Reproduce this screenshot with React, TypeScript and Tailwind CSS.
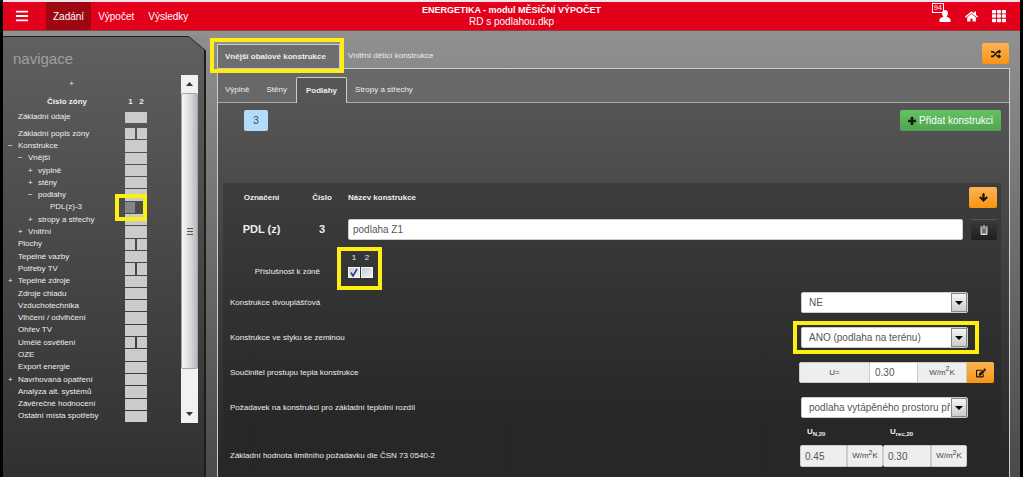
import { ReactNode } from "react";
import {
  FaArrowDown,
  FaBars,
  FaEdit,
  FaHome,
  FaRandom,
  FaTh,
} from "react-icons/fa";

type NavItem = {
  name: string;
  level?: number;
  sign?: string;
  split?: boolean;
  current?: boolean;
};

const navItems: NavItem[] = [
  { name: "Základní popis zóny", split: true },
  { name: "Konstrukce", sign: "−" },
  { name: "Vnější", sign: "−", level: 1 },
  { name: "výplně", sign: "+", level: 2 },
  { name: "stěny", sign: "+", level: 2 },
  { name: "podlahy", sign: "−", level: 2 },
  { name: "PDL(z)-3", level: 3, current: true },
  { name: "stropy a střechy", sign: "+", level: 2 },
  { name: "Vnitřní", sign: "+", level: 1 },
  { name: "Plochy", split: true },
  { name: "Tepelné vazby" },
  { name: "Potřeby TV", split: true },
  { name: "Tepelné zdroje", sign: "+" },
  { name: "Zdroje chladu" },
  { name: "Vzduchotechnika" },
  { name: "Vlhčení / odvlhčení" },
  { name: "Ohřev TV" },
  { name: "Umělé osvětlení", split: true },
  { name: "OZE" },
  { name: "Export energie" },
  { name: "Navrhovaná opatření", sign: "+" },
  { name: "Analýza alt. systémů" },
  { name: "Závěrečné hodnocení" },
  { name: "Ostatní místa spotřeby" },
];

const indents = ["pl-0", "pl-[10px]", "pl-[20px]", "pl-[32px]"];

const orangeButton =
  "flex items-center justify-center bg-linear-to-b from-[#fbb450] to-[#f89406] text-[#1c1408]";

// Yellow frame drawn over the part of the form being pointed at
const Highlight = ({ className }: { className: string }) => (
  <span
    className={`pointer-events-none absolute z-10 border-4 border-[#fdf010] ${className}`}
  />
);

const Header = () => (
  <header className="grid grid-cols-[1fr_auto_1fr] h-[31px] border-t-2 border-t-[#f3e3ec] border-b border-b-[#8b4046] bg-[#e2001a] text-white">
    <nav className="flex items-stretch text-[10px]">
      <button aria-label="Menu" className="w-[43px] pl-[12px] text-[14px]">
        <FaBars />
      </button>
      <a href="#zadani" className="flex items-center bg-[#9c0712] px-[7px]">
        Zadání
      </a>
      <a href="#vypocet" className="flex items-center px-[7px]">
        Výpočet
      </a>
      <a href="#vysledky" className="flex items-center px-[7px]">
        Výsledky
      </a>
    </nav>
    <div className="text-center text-[10px] leading-3 pt-[2px]">
      <h1 className="text-[9px] font-bold">
        ENERGETIKA - modul MĚSÍČNÍ VÝPOČET
      </h1>
      <p>RD s podlahou.dkp</p>
    </div>
    <div className="flex items-center justify-end gap-[14px] pr-[14px]">
      <a href="#uzivatel" aria-label="Uživatel" className="relative">
        <span className="absolute -left-[7px] -top-[7px] border border-white px-px text-[7px] leading-[8px]">
          94
        </span>
        <svg
          className="relative"
          width="12"
          height="12"
          viewBox="0 0 12 12"
          fill="currentColor"
        >
          <path d="M6 0C8 0 9 1.300 9 3.200C9 4.600 8.400 5.600 7.600 6.300C7.700 7.400 11.500 7.600 11.500 10V12H0.500V10C0.500 7.600 4.300 7.400 4.400 6.300C3.600 5.600 3 4.600 3 3.200C3 1.300 4 0 6 0z" />
        </svg>
      </a>
      <a href="#domu" aria-label="Domů" className="text-[13px]">
        <FaHome />
      </a>
      <a href="#moduly" aria-label="Moduly" className="text-[14px]">
        <FaTh />
      </a>
    </div>
  </header>
);

const ZoneBars = ({ split, current }: { split?: boolean; current?: boolean }) => {
  if (current) {
    return (
      <span className="relative flex w-[22px] shrink-0">
        <span className="w-[10px] bg-[#858585]" />
        <Highlight className="-left-[10px] right-0 -top-[8px] -bottom-[8px]" />
      </span>
    );
  }
  return (
    <span className="flex w-[22px] shrink-0 gap-[2px]">
      <span className="flex-1 bg-[#cbcbcb]" />
      {split && <span className="flex-1 bg-[#cbcbcb]" />}
    </span>
  );
};

const NavRow = ({ name, level = 0, sign, split, current }: NavItem) => (
  <li className="flex flex-1 pb-px">
    <a
      href="#konstrukce"
      className={`flex flex-1 items-center leading-[10px] whitespace-nowrap ${indents[level]}`}
    >
      <span className="w-[10px] shrink-0">{sign}</span>
      {name}
    </a>
    <ZoneBars split={split} current={current} />
  </li>
);

const Scrollbar = () => (
  <div className="flex w-[17px] flex-col bg-[#f1f1f1]">
    <div className="flex h-[18px] items-center justify-center">
      <svg width="7" height="4" viewBox="0 0 7 4">
        <path d="M0 4L3.500 0L7 4z" fill="#333" />
      </svg>
    </div>
    <div className="flex h-[276px] flex-col items-center justify-center gap-[2px] rounded-xs border border-[#a5a5a5] bg-linear-to-r from-[#f8f8f8] via-[#dcdce0] to-[#b8b8c0]">
      <span className="h-px w-[6px] bg-[#555]" />
      <span className="h-px w-[6px] bg-[#555]" />
      <span className="h-px w-[6px] bg-[#555]" />
    </div>
    <div className="flex flex-1 items-end justify-center pb-[7px]">
      <svg width="7" height="4" viewBox="0 0 7 4">
        <path d="M0 0L3.500 4L7 0z" fill="#333" />
      </svg>
    </div>
  </div>
);

const Sidebar = () => (
  <aside className="relative mt-[5px] w-[203px] shrink-0 border-t border-r-2 border-[#1d1d1d] bg-linear-to-b from-[#606060] to-[#303030] to-[440px] text-[8px] text-[#eee]">
    <svg
      className="absolute -right-[2px] -top-px"
      width="18"
      height="15"
      viewBox="0 0 18 15"
    >
      <path d="M0 0H18V15z" fill="#8c8c8c" />
      <path d="M0 0L18 15" stroke="#222" />
    </svg>
    <h2 className="pl-[10px] pt-[12px] text-[15px] leading-5 text-[#a0a0a0]">
      navigace
    </h2>
    <div className="flex pl-[5px] pr-[6px] pt-[6px]">
      <div className="flex-1 pr-[34px]">
        <p className="pr-[12px] text-center leading-[18px]">+</p>
        <div className="flex h-[18px] items-center font-bold">
          <span className="flex-1 pl-[39px]">Číslo zóny</span>
          <span className="flex w-[22px] justify-around">
            <span>1</span>
            <span>2</span>
          </span>
        </div>
        <div className="flex h-[12px] items-center">
          <a href="#zakladni" className="flex-1 pl-[10px]">
            Základní údaje
          </a>
          <span className="h-[11px] w-[22px] bg-[#cbcbcb]" />
        </div>
        <ul className="mt-[5px] flex h-[295px] flex-col">
          {navItems.map((item) => (
            <NavRow key={item.name} {...item} />
          ))}
        </ul>
      </div>
      <Scrollbar />
    </div>
  </aside>
);

const Select = ({
  id,
  value,
  highlight,
}: {
  id: string;
  value: string;
  highlight?: boolean;
}) => (
  <div className="relative ml-[2px] flex h-[21px] w-[167px]">
    <select
      id={id}
      defaultValue={value}
      className="w-full appearance-none rounded-xs border border-[#ccc] bg-white pl-[7px] pr-[17px] text-[10px] text-[#555]"
    >
      <option>{value}</option>
    </select>
    <span className="pointer-events-none absolute inset-y-px right-px flex w-[16px] items-center justify-center border border-[#888] bg-linear-to-b from-[#f5f5f5] to-[#ccc]">
      <svg width="8" height="4" viewBox="0 0 8 4">
        <path d="M0 0H8L4 4z" fill="#000" />
      </svg>
    </span>
    {highlight && (
      <Highlight className="-left-[8px] -right-[11px] -top-[6px] -bottom-[6px]" />
    )}
  </div>
);

const Unit = ({ className }: { className: string }) => (
  <span
    className={`flex items-center justify-center border border-[#ccc] bg-[#eee] text-[8px] text-[#444] ${className}`}
  >
    <span>
      W/m<sup className="text-[7px]">2</sup>K
    </span>
  </span>
);

const FormRow = ({
  id,
  label,
  children,
}: {
  id: string;
  label: string;
  children: ReactNode;
}) => (
  <div className="flex h-[35px] items-center">
    <label htmlFor={id} className="flex-1">
      {label}
    </label>
    <div className="w-[202px]">{children}</div>
  </div>
);

const LimitField = ({
  id,
  sub,
  value,
  width,
}: {
  id: string;
  sub: string;
  value: string;
  width: string;
}) => (
  <div className={width}>
    <label htmlFor={id} className="block h-[19px] pl-[7px] font-bold leading-3">
      U<sub className="text-[6px]">{sub}</sub>
    </label>
    <div className="flex h-[22px]">
      <input
        id={id}
        readOnly
        defaultValue={value}
        className="w-0 flex-1 rounded-l-xs border border-[#ccc] bg-[#eee] pl-[4px] text-[10px] text-[#555]"
      />
      <Unit className="w-[36px] rounded-r-xs" />
    </div>
  </div>
);

const ZoneCheckbox = ({ zone, checked }: { zone: string; checked?: boolean }) => (
  <label className="grid w-[12px] grid-rows-[15px_11px]">
    <span>{zone}</span>
    <input
      type="checkbox"
      defaultChecked={checked}
      className="peer col-start-1 row-start-2 h-[11px] w-[12px] appearance-none border border-[#f4f4f4] bg-linear-to-br from-[#c9ced6] to-[#f0f2f5]"
    />
    <svg
      className="pointer-events-none invisible col-start-1 row-start-2 self-center justify-self-center peer-checked:visible"
      width="8"
      height="9"
      viewBox="0 0 8 9"
      fill="none"
    >
      <path d="M1 4.500L3 8L7 1" stroke="#26418f" strokeWidth="1.600" />
    </svg>
  </label>
);

const ConstructionForm = () => (
  <form className="ml-[5px] mr-[8px] mt-[52px] flex-1 bg-linear-to-b from-[#3d3d3d] to-[#272727] to-[240px] text-[8px] text-[#eee]">
    <div className="grid grid-cols-[77px_44px_1fr_38px] items-center">
      <span className="text-center font-bold">Označení</span>
      <span className="text-center font-bold">Číslo</span>
      <label htmlFor="nazev" className="pl-[4px] font-bold">
        Název konstrukce
      </label>
      <div className="flex h-[29px] items-center">
        <button
          type="button"
          aria-label="Dolů"
          className={`${orangeButton} ml-[6px] h-[21px] w-[28px] rounded-xs text-[9px]`}
        >
          <FaArrowDown className="stroke-current stroke-[50px]" />
        </button>
      </div>

      <span className="text-center text-[11px] font-bold">PDL (z)</span>
      <span className="text-center text-[11px] font-bold">3</span>
      <input
        id="nazev"
        defaultValue="podlaha Z1"
        className="ml-[4px] h-[21px] rounded-xs border border-[#ccc] bg-white pl-[4px] text-[10px] text-[#555]"
      />
      <div className="flex h-[34px] items-center">
        <button
          type="button"
          aria-label="Smazat"
          className="ml-[8px] flex h-[21px] w-[26px] items-center justify-center rounded-xs border-t border-[#555] bg-linear-to-b from-[#3b3b3b] to-[#1e1e1e]"
        >
          <svg width="8" height="10" viewBox="0 0 8 10" fill="none">
            <path d="M0 2H8M3 1H5" stroke="#ddd" />
            <path d="M1 3V9.500H7V3" fill="#999" stroke="#ddd" />
            <path d="M3 4V8M5 4V8" stroke="#444" />
          </svg>
        </button>
      </div>
    </div>

    <div
      role="group"
      aria-labelledby="zony"
      className="flex h-[39px] items-end"
    >
      <span
        id="zony"
        className="w-[125px] pb-[7px] pr-[28px] text-right whitespace-nowrap"
      >
        Příslušnost k zóně
      </span>
      <div className="relative flex gap-px pb-[7px] text-center">
        <ZoneCheckbox zone="1" checked />
        <ZoneCheckbox zone="2" />
        <Highlight className="-left-[11px] -right-[9px] -top-[5px] -bottom-[5px]" />
      </div>
    </div>

    <div className="pl-[7px]">
      <FormRow id="dvouplast" label="Konstrukce dvouplášťová">
        <Select id="dvouplast" value="NE" />
      </FormRow>
      <FormRow id="zemina" label="Konstrukce ve styku se zeminou">
        <Select id="zemina" value="ANO (podlaha na terénu)" highlight />
      </FormRow>
      <FormRow id="soucinitel" label="Součinitel prostupu tepla konstrukce">
        <div className="flex h-[21px] w-[195px]">
          <span className="flex w-[71px] items-center justify-center rounded-l-xs border border-[#ccc] bg-[#eee] text-[8px] text-[#444]">
            U=
          </span>
          <input
            id="soucinitel"
            defaultValue="0.30"
            className="w-[47px] border-y border-[#ccc] bg-white pl-[5px] text-[10px] text-[#555]"
          />
          <Unit className="w-[50px]" />
          <button
            type="button"
            aria-label="Upravit"
            className={`${orangeButton} w-[27px] rounded-r-xs text-[10px]`}
          >
            <FaEdit />
          </button>
        </div>
      </FormRow>
      <FormRow
        id="pozadavek"
        label="Požadavek na konstrukci pro základní teplotní rozdíl"
      >
        <Select id="pozadavek" value="podlaha vytápěného prostoru př" />
      </FormRow>
      <div className="flex h-[42px] items-end">
        <span className="flex-1 pb-[5px]">
          Základní hodnota limitního požadavku dle ČSN 73 0540-2
        </span>
        <div className="flex w-[202px] pl-px">
          <LimitField id="un20" sub="N,20" value="0.45" width="w-[83px]" />
          <LimitField id="urec20" sub="rec,20" value="0.30" width="w-[84px]" />
        </div>
      </div>
    </div>
  </form>
);

const Content = () => (
  <main className="flex min-w-0 flex-1 flex-col pl-[11px] pr-[10px] pt-[13px] text-[8px] text-[#eee]">
    <div className="flex h-[24px] items-stretch">
      <a
        href="#vnejsi"
        className="relative flex w-[123px] items-center border-x border-t border-[#ccc] bg-[#6e6e6e] pl-[7px] font-bold whitespace-nowrap"
      >
        Vnější obalové konstrukce
        <Highlight className="-left-[8px] -right-[5px] -top-[7px] -bottom-[5px]" />
      </a>
      <a href="#vnitrni" className="flex items-center pl-[8px]">
        Vnitřní dělící konstrukce
      </a>
      <button
        aria-label="Přepnout"
        className={`${orangeButton} -mt-px ml-auto mr-px h-[21px] w-[27px] rounded-xs text-[10px]`}
      >
        <FaRandom />
      </button>
    </div>
    <section className="flex flex-1 flex-col border border-b-0 border-[#ccc] bg-linear-to-b from-[#5a5a5a] to-[#272727] to-[400px]">
      <nav className="flex h-[34px] items-stretch border-b border-[#aaa] bg-[#686868] pt-[8px]">
        <a href="#vyplne" className="flex items-center px-[7px]">
          Výplně
        </a>
        <a href="#steny" className="flex items-center pl-[10px] pr-[9px]">
          Stěny
        </a>
        <a
          href="#podlahy"
          className="-mb-px flex items-center rounded-t-xs border border-b-0 border-[#ccc] bg-[#565656] px-[9px] font-bold"
        >
          Podlahy
        </a>
        <a href="#stropy" className="flex items-center px-[8px]">
          Stropy a střechy
        </a>
      </nav>
      <div className="flex items-start justify-between pl-[26px] pr-[8px] pt-[7px]">
        <button className="h-[21px] w-[24px] rounded-xs bg-[#b3dbfb] text-[10px] text-[#31506b]">
          3
        </button>
        <button className="flex h-[21px] items-center gap-[3px] rounded-xs bg-linear-to-b from-[#62c462] to-[#51a351] px-[8px] text-[10px] text-white">
          <svg width="8" height="8" viewBox="0 0 8 8">
            <path d="M4 0V8M0 4H8" stroke="#0c200c" strokeWidth="2.600" />
          </svg>
          Přidat konstrukci
        </button>
      </div>
      <ConstructionForm />
    </section>
  </main>
);

const App = () => (
  <div className="flex min-h-screen flex-col border-l-[3px] border-r-[3px] border-black bg-linear-to-b from-[#969696] to-[#4a4a4a] font-['Liberation_Sans',sans-serif]">
    <Header />
    <div className="flex flex-1">
      <Sidebar />
      <Content />
    </div>
  </div>
);

export default App;
